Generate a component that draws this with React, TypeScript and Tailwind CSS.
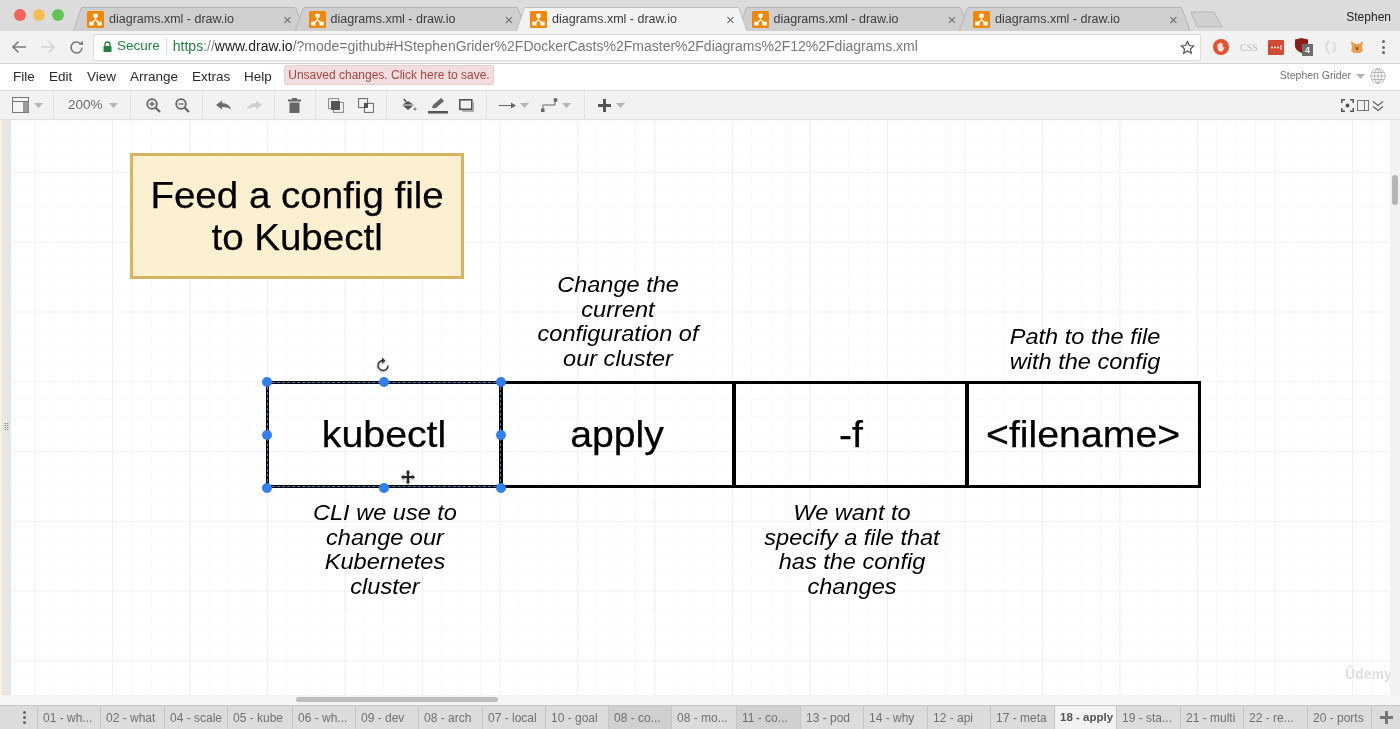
import React from "react";

const sans = "font-['Liberation_Sans',Arial,sans-serif]";

function Favicon() {
  return (
    <svg width="17" height="17" viewBox="0 0 17 17" className="shrink-0">
      <rect width="17" height="17" rx="1.5" fill="#f08705" />
      <path d="M8.5 6v3M8.5 9L4.5 12M8.5 9l4 3" stroke="#fff" strokeWidth="1.3" fill="none" />
      <rect x="6.3" y="2.8" width="4.4" height="3.6" rx=".5" fill="#fff" />
      <rect x="2.2" y="10.8" width="4.4" height="3.6" rx=".5" fill="#fff" />
      <rect x="10.4" y="10.8" width="4.4" height="3.6" rx=".5" fill="#fff" />
    </svg>
  );
}

function ChromeTab({ active }: { active?: boolean }) {
  return (
    <div className={`relative w-[221.5px] h-[24px] shrink-0 ${active ? "z-10" : ""}`}>
      <svg width="236" height="24" viewBox="0 0 236 24" className="absolute left-0 top-0">
        <path d="M0.5 24 L8 1.500 Q8.500 .5 10 .5 L221 .5 Q222.500 .5 223 1.500 L231 24" fill={active ? "#f2f2f2" : "#cfcfcf"} stroke={active ? "#bdbdbd" : "#b4b4b4"} strokeWidth="1" />
      </svg>
      <div className="absolute left-[14px] top-0 h-[24px] flex items-center">
        <div className="flex items-center gap-[5px] w-[196px]">
          <Favicon />
          <span className="text-[12.500px] text-[#3c3c3c] whitespace-nowrap">diagrams.xml - draw.io</span>
        </div>
        <span className="text-[15px] leading-none text-[#6d6d6d]">×</span>
      </div>
    </div>
  );
}

function Caret({ c = "#b5b5b5" }: { c?: string }) {
  return (
    <svg width="9" height="5" viewBox="0 0 9 5" className="shrink-0"><path d="M0 0h9L4.500 5z" fill={c} /></svg>
  );
}

const tabs: [string, number][] = [
  ["01 - wh...", 63], ["02 - what", 64], ["04 - scale", 63], ["05 - kube", 65], ["06 - wh...", 63],
  ["09 - dev", 63], ["08 - arch", 64], ["07 - local", 63], ["10 - goal", 63], ["08 - co...", 63],
  ["08 - mo...", 65], ["11 - co...", 64], ["13 - pod", 63], ["14 - why", 64], ["12 - api", 63],
  ["17 - meta", 64], ["18 - apply", 62], ["19 - sta...", 64], ["21 - multi", 63], ["22 - re...", 64], ["20 - ports", 64],
];

function Node({ x, w, text }: { x: number; w: number; text: string }) {
  return (
    <div style={{ left: x, width: w }} className="absolute top-[261px] h-[107px] border-[3.500px] border-black flex items-center justify-center text-[36px] text-black [-webkit-text-stroke:0.25px_black]">
      <span className="scale-x-[1.09]">{text}</span>
    </div>
  );
}

function Note({ cx, y, lines }: { cx: number; y: number; lines: string[] }) {
  return (
    <div style={{ left: cx - 120, top: y }} className="absolute w-[240px] text-center italic text-[22px] leading-[24.500px] text-black scale-x-[1.07]">
      {lines.map((l) => <div key={l}>{l}</div>)}
    </div>
  );
}

function Handle({ x, y }: { x: number; y: number }) {
  return <div style={{ left: x - 5, top: y - 5 }} className="absolute w-[10px] h-[10px] rounded-full bg-[#2f80ed]" />;
}

export default function App() {
  return (
    <div className={`${sans} w-[1400px] h-[729px] overflow-hidden flex flex-col bg-white blur-[0.4px]`}>
      {/* Title bar */}
      <div className="h-[31px] bg-[#dcdcdc] flex items-end relative shrink-0">
        <div className="flex items-center gap-[7px] pl-[14px] w-[73px] h-full pb-[2px] shrink-0">
          <span className="w-[12px] h-[12px] rounded-full bg-[#f2635a]" />
          <span className="w-[12px] h-[12px] rounded-full bg-[#f7bd4f]" />
          <span className="w-[12px] h-[12px] rounded-full bg-[#5fc453]" />
        </div>
        <ChromeTab />
        <ChromeTab />
        <ChromeTab active />
        <ChromeTab />
        <ChromeTab />
        <svg width="34" height="17" viewBox="0 0 34 17" className="ml-[9px] mb-[3px] shrink-0"><path d="M1 1h22q1 0 1.500 1L32 16H8q-1 0-1.500-1z" fill="#d0d0d0" stroke="#b8b8b8" /></svg>
        <span className="absolute right-[9px] top-[8px] text-[12px] text-[#222]">Stephen</span>
      </div>

      {/* Address row */}
      <div className="h-[33px] bg-[#f2f2f2] border-b border-[#d4d4d4] flex items-center shrink-0">
        <div className="w-[93px] flex items-center gap-[13px] pl-[11px] shrink-0">
          <svg width="16" height="14" viewBox="0 0 16 14"><path d="M15 7H2M7.500 1.500L2 7l5.500 5.500" stroke="#7a7a7a" strokeWidth="1.600" fill="none" /></svg>
          <svg width="16" height="14" viewBox="0 0 16 14"><path d="M1 7h13M8.500 1.500L14 7l-5.500 5.500" stroke="#d2d2d2" strokeWidth="1.600" fill="none" /></svg>
          <svg width="15" height="15" viewBox="0 0 15 15"><path d="M13 7.500A5.500 5.500 0 1 1 11.200 3.400" stroke="#7a7a7a" strokeWidth="1.600" fill="none" /><path d="M9.500 4.500L14 5V.8z" fill="#7a7a7a" /></svg>
        </div>
        <div className="w-[1108px] h-[27px] bg-white border border-[#dcdcdc] rounded-[2px] flex items-center pl-[8px] pb-[1px] text-[14px] shrink-0 relative">
          <svg width="11" height="12" viewBox="0 0 11 12" className="shrink-0"><path d="M3 5V3.500a2.500 2.500 0 0 1 5 0V5" stroke="#23803f" strokeWidth="1.300" fill="none" /><rect x="1.500" y="5" width="8" height="6" rx="1" fill="#23803f" /></svg>
          <span className="ml-[4px] text-[#23803f] text-[13.500px]">Secure</span>
          <span className="mx-[6px] w-px h-[17px] bg-[#d8d8d8]" />
          <span className="text-[#23803f]">https</span>
          <span className="text-[#888]">://</span>
          <span className="text-[#222]">www.draw.io</span>
          <span className="text-[#777]">/?mode=github#HStephenGrider%2FDockerCasts%2Fmaster%2Fdiagrams%2F12%2Fdiagrams.xml</span>
          <svg width="15" height="15" viewBox="0 0 24 24" className="absolute right-[5px] top-[5px]"><path d="M12 2.500l2.900 6.300 6.900.8-5.100 4.700 1.400 6.800-6.100-3.400-6.100 3.400 1.400-6.800L2.200 9.600l6.900-.8z" fill="none" stroke="#555" strokeWidth="2" /></svg>
        </div>
        <div className="flex-1 flex items-center h-full pl-[12px] gap-[11px]">
          <svg width="16" height="16" viewBox="0 0 16 16"><circle cx="8" cy="8" r="8" fill="#e2502f" /><path d="M4.500 7.500V5.500q.7-.8 1.300 0V4.500q.7-.8 1.300 0V4q.7-.8 1.300 0v.5q.7-.7 1.300 0V9l1-1q1 0 .6 1L9.500 12.500h-3Q4.500 11 4.500 9z" fill="#fbe3dc" /></svg>
          <span className="text-[10px] text-[#bdbdbd] w-[17px] font-['Liberation_Serif',serif]">CSS</span>
          <svg width="16" height="15" viewBox="0 0 16 15"><rect width="16" height="15" rx="1" fill="#d24b32" /><circle cx="4" cy="7.500" r="1" fill="#fff" /><circle cx="7" cy="7.500" r="1" fill="#fff" /><circle cx="10" cy="7.500" r="1" fill="#fff" /><rect x="12.500" y="5" width="1" height="5" fill="#fff" /></svg>
          <div className="relative w-[17px] h-[18px]">
            <svg width="13" height="15" viewBox="0 0 13 15" className="absolute left-0 top-0"><path d="M0 1.500L6.500 0 13 1.500V8q0 4-6.500 7Q0 12 0 8z" fill="#8c1d18" /></svg>
            <span className="absolute left-[7px] top-[6px] w-[11px] h-[12px] bg-[#6d6d6d] text-white text-[9px] leading-[12px] text-center font-bold">4</span>
          </div>
          <svg width="16" height="16" viewBox="0 0 16 16"><path d="M7 2A6.500 6.500 0 0 0 7 14M9.500 3A6 6 0 0 1 9.500 13" stroke="#dedede" strokeWidth="2.500" fill="none" /></svg>
          <svg width="14" height="14" viewBox="0 0 14 14"><path d="M1 1l4 3h4l4-3-1 7 1 3-3 2H4l-3-2 1-3z" fill="#e8a04a" /><path d="M5 6l2 2 2-2-1 4H6z" fill="#8a5a2b" /></svg>
          <div className="flex flex-col gap-[2.500px] ml-[7px]">
            <span className="w-[3px] h-[3px] rounded-full bg-[#666]" />
            <span className="w-[3px] h-[3px] rounded-full bg-[#666]" />
            <span className="w-[3px] h-[3px] rounded-full bg-[#666]" />
          </div>
        </div>
      </div>

      {/* Menu row */}
      <div className="h-[26px] bg-white flex items-center pl-[13px] relative shrink-0 text-[13.500px] text-[#2a2a2a]">
        <span className="w-[36px]">File</span>
        <span className="w-[38px]">Edit</span>
        <span className="w-[43px]">View</span>
        <span className="w-[62px]">Arrange</span>
        <span className="w-[52px]">Extras</span>
        <span className="w-[40px]">Help</span>
        <div className="h-[20px] w-[210px] rounded-[2px] bg-[#f2dede] border border-[#ebcccc] text-[#a94442] text-[12px] flex items-center justify-center mt-[-4px]">Unsaved changes. Click here to save.</div>
        <div className="absolute right-[14px] top-[4px] flex items-center gap-[5px] text-[10.500px] text-[#707070]">
          <span>Stephen Grider</span>
          <Caret />
          <svg width="16" height="16" viewBox="0 0 16 16"><g fill="none" stroke="#aaa" strokeWidth=".8"><circle cx="8" cy="8" r="7.300" /><ellipse cx="8" cy="8" rx="3.500" ry="7.300" /><path d="M8 .7v14.600M.7 8h14.600M1.800 4.500h12.400M1.800 11.500h12.400" /></g></svg>
        </div>
      </div>

      {/* Toolbar */}
      <div className="h-[30px] bg-[#f2f2f2] border-y border-[#e0e0e0] flex items-center shrink-0 relative text-[#6b6b6b]">
        <div className="w-[54px] h-full border-r border-[#e2e2e2] flex items-center pl-[12px] gap-[5px] shrink-0">
          <svg width="17" height="16" viewBox="0 0 17 16"><rect x=".5" y=".5" width="16" height="15" fill="#f4f4f4" stroke="#777" /><path d="M.5 4.500h16" stroke="#777" /><rect x="11" y="5" width="5.500" height="10" fill="#999" /></svg>
          <Caret />
        </div>
        <div className="w-[77px] h-full border-r border-[#e2e2e2] flex items-center pl-[14px] gap-[6px] shrink-0 text-[13.500px]">
          <span>200%</span><Caret />
        </div>
        <div className="w-[72px] h-full border-r border-[#e2e2e2] flex items-center pl-[15px] gap-[14px] shrink-0">
          <svg width="15" height="15" viewBox="0 0 15 15"><circle cx="6" cy="6" r="4.800" fill="none" stroke="#666" strokeWidth="1.800" /><path d="M9.500 9.500L14 14" stroke="#666" strokeWidth="2.200" /><path d="M3.500 6h5M6 3.500v5" stroke="#666" strokeWidth="1.300" /></svg>
          <svg width="15" height="15" viewBox="0 0 15 15"><circle cx="6" cy="6" r="4.800" fill="none" stroke="#666" strokeWidth="1.800" /><path d="M9.500 9.500L14 14" stroke="#666" strokeWidth="2.200" /><path d="M3.500 6h5" stroke="#666" strokeWidth="1.300" /></svg>
        </div>
        <div className="w-[72px] h-full border-r border-[#e2e2e2] flex items-center pl-[13px] gap-[16px] shrink-0">
          <svg width="15" height="10" viewBox="0 0 15 10"><path d="M0 5l6-4.500V3q7 0 9 6.500Q12 6.500 6 7v2.500z" fill="#6d6d6d" /></svg>
          <svg width="15" height="10" viewBox="0 0 15 10"><path d="M15 5L9 .5V3Q2 3 0 9.500 3 6.500 9 7v2.500z" fill="#cfcfcf" /></svg>
        </div>
        <div className="w-[41px] h-full border-r border-[#e2e2e2] flex items-center pl-[13px] shrink-0">
          <svg width="13" height="15" viewBox="0 0 13 15"><rect y="1.500" width="13" height="2" fill="#666" /><rect x="4" width="5" height="2" fill="#666" /><path d="M1.500 4.500h10V15h-10z" fill="#666" /></svg>
        </div>
        <div className="w-[71px] h-full border-r border-[#e2e2e2] flex items-center pl-[12px] gap-[14px] shrink-0">
          <svg width="16" height="15" viewBox="0 0 16 15"><rect x=".6" y=".6" width="10" height="10" fill="none" stroke="#888" /><rect x="5.400" y="4.400" width="10" height="10" fill="none" stroke="#888" /><rect x="3" y="3" width="9" height="9" fill="#555" /></svg>
          <svg width="16" height="15" viewBox="0 0 16 15"><rect x=".6" y=".6" width="9" height="9" fill="#f4f4f4" stroke="#666" /><rect x="6.400" y="5.400" width="9" height="9" fill="#f4f4f4" stroke="#666" /><rect x="6" y="5" width="4" height="5" fill="#555" /></svg>
        </div>
        <div className="w-[100px] h-full border-r border-[#e2e2e2] flex items-center pl-[13px] gap-[11px] shrink-0">
          <svg width="17" height="15" viewBox="0 0 17 15"><path d="M2 7l6-4 6 4-6 5z" fill="#555" /><path d="M4 1l2 3" stroke="#555" strokeWidth="1.500" /><circle cx="15" cy="11" r="1.500" fill="#888" /><path d="M2 7h12" stroke="#eee" /></svg>
          <svg width="20" height="17" viewBox="0 0 20 17"><path d="M4 11l1-3 8-7 3 3-8 7z" fill="#666" /><rect x="0" y="14" width="20" height="2.500" fill="#555" /></svg>
          <svg width="15" height="13" viewBox="0 0 15 13"><rect x=".8" y=".8" width="12" height="9.500" fill="none" stroke="#555" strokeWidth="1.600" /><path d="M3 12h11V3" stroke="#999" strokeWidth="1.600" fill="none" /></svg>
        </div>
        <div className="w-[98px] h-full border-r border-[#e2e2e2] flex items-center pl-[12px] shrink-0">
          <svg width="17" height="7" viewBox="0 0 17 7"><path d="M0 3.500h13" stroke="#666" /><path d="M12 .5l5 3-5 3z" fill="#666" /></svg>
          <span className="ml-[4px] mr-[12px]"><Caret /></span>
          <svg width="17" height="14" viewBox="0 0 17 14"><path d="M2 12V7h12V2" fill="none" stroke="#666" /><rect x="0" y="10.500" width="3.500" height="3.500" fill="#666" /><circle cx="14.500" cy="2" r="2" fill="#666" /></svg>
          <span className="ml-[4px]"><Caret /></span>
        </div>
        <div className="flex items-center pl-[13px] gap-[5px] shrink-0">
          <svg width="13" height="13" viewBox="0 0 13 13"><path d="M6.500 0v13M0 6.500h13" stroke="#555" strokeWidth="3" /></svg>
          <Caret />
        </div>
        <div className="absolute right-[16px] top-[8px] flex items-center gap-[3px]">
          <svg width="13" height="13" viewBox="0 0 13 13"><path d="M.8 4V.8H4M9 .8h3.200V4M12.200 9v3.200H9M4 12.200H.8V9" fill="none" stroke="#555" strokeWidth="1.500" /><circle cx="6.500" cy="6.500" r="2" fill="#555" /></svg>
          <svg width="12" height="11" viewBox="0 0 12 11"><rect x=".5" y=".5" width="11" height="10" fill="none" stroke="#777" /><path d="M7.500 .5v10" stroke="#777" /></svg>
          <svg width="12" height="12" viewBox="0 0 12 12"><path d="M1 1.500l5 4 5-4M1 6.500l5 4 5-4" fill="none" stroke="#666" strokeWidth="1.300" /></svg>
        </div>
      </div>

      {/* Middle */}
      <div className="flex-1 min-h-0 flex">
        <div className="w-[2px] bg-[#fbf1dc] shrink-0" />
        <div className="w-[9px] bg-[#e6e6e6] flex items-center justify-center shrink-0">
          <span className="text-[9px] text-[#555] leading-none mt-[40px]">⁞⁞</span>
        </div>
        <div className="flex-1 relative overflow-hidden bg-white">
          <div className="absolute inset-0 bg-[linear-gradient(to_right,#f0f0f0_1px,transparent_1px),linear-gradient(to_bottom,#f3f3f3_1px,transparent_1px),linear-gradient(to_right,#f9f9f9_1px,transparent_1px),linear-gradient(to_bottom,#fafafa_1px,transparent_1px)] bg-[size:77.500px_69.750px,77.500px_69.750px,19.375px_17.437px,19.375px_17.437px] bg-[position:23.500px_52px,23.500px_52px,4px_0px,4px_0px]" />
          {/* Title card */}
          <div className="absolute left-[119px] top-[33px] w-[334px] h-[126px] bg-[#fdf0d0] border-[3.500px] border-[#d6b35f] flex items-center justify-center text-center text-[36px] leading-[42px] text-black [-webkit-text-stroke:0.25px_black]">
            <div className="scale-x-[1.07] mt-[1px]">Feed a config file<br />to Kubectl</div>
          </div>

          <Node x={255} w={236} text="kubectl" />
          <Node x={489} w={235} text="apply" />
          <Node x={722} w={235} text="-f" />
          <Node x={955} w={235} text="<filename>" />

          <Note cx={607} y={153} lines={["Change the", "current", "configuration of", "our cluster"]} />
          <Note cx={1074} y={205} lines={["Path to the file", "with the config"]} />
          <Note cx={374} y={381} lines={["CLI we use to", "change our", "Kubernetes", "cluster"]} />
          <Note cx={841} y={381} lines={["We want to", "specify a file that", "has the config", "changes"]} />

          {/* Selection */}
          <div className="absolute left-[256px] top-[262px] w-[234px] h-[105px] border border-dashed border-[#3b82c4]" />
          {[[256, 262], [373, 262], [489.500, 262], [256, 315], [489.500, 315], [256, 367.500], [373, 367.500], [489.500, 367.500]].map(([x, y]) => (
            <Handle key={`${x}-${y}`} x={x} y={y} />
          ))}
          <svg width="16" height="16" viewBox="0 0 16 16" className="absolute left-[364px] top-[237px] drop-shadow-[0_1px_1px_rgba(0,0,0,0.4)]">
            <path d="M13 8.500A5 5 0 1 1 9.500 3.700" fill="none" stroke="#333" strokeWidth="1.400" />
            <path d="M7 .5l3.500 3.200L7 6.500z" fill="#333" />
          </svg>
          <svg width="14" height="14" viewBox="0 0 14 14" className="absolute left-[390px] top-[350px] drop-shadow-[0_1px_1px_rgba(0,0,0,0.4)]">
            <path d="M7 0l2.200 2.500H8V6h3.500V4.800L14 7l-2.500 2.200V8H8v3.500h1.200L7 14l-2.200-2.500H6V8H2.500v1.200L0 7l2.500-2.200V6H6V2.500H4.800z" fill="#222" />
          </svg>
          <span className="absolute left-[1334px] top-[544px] text-[14px] text-[#dedede] font-bold">Ûdemy</span>

          {/* vertical scrollbar */}
          <div className="absolute right-0 top-0 bottom-0 w-[10px] bg-[#f2f2f2]">
            <div className="absolute left-[2px] top-[55px] w-[6px] h-[30px] rounded-full bg-[#b5b5b5]" />
          </div>
        </div>
      </div>

      {/* Horizontal scrollbar */}
      <div className="h-[10px] bg-[#f5f5f5] shrink-0 relative">
        <div className="absolute left-[296px] top-[2px] w-[202px] h-[5px] rounded-full bg-[#bdbdbd]" />
      </div>

      {/* Sheet tabs */}
      <div className="h-[24px] pl-[11px] bg-[#dcdcdc] border-t border-[#c8c8c8] flex shrink-0 text-[12px] text-[#707070]">
        <div className="w-[27px] flex flex-col items-center justify-center gap-[2px] border-r border-[#c4c4c4] shrink-0">
          <span className="w-[3px] h-[3px] rounded-full bg-[#666]" />
          <span className="w-[3px] h-[3px] rounded-full bg-[#666]" />
          <span className="w-[3px] h-[3px] rounded-full bg-[#666]" />
        </div>
        {tabs.map(([t, w]) => (
          <div
            key={t}
            style={{ width: w }}
            className={`${t === "18 - apply" ? "bg-[#f2f2f2] font-bold text-[#555] text-[11.500px]" : t === "08 - co..." || t === "11 - co..." ? "bg-[#d0d0d0]" : ""} border-r border-[#c4c4c4] pl-[5px] flex items-center whitespace-nowrap shrink-0`}
          >
            {t}
          </div>
        ))}
        <div className="flex-1 flex items-center justify-center">
          <svg width="13" height="13" viewBox="0 0 13 13"><path d="M6.500 0v13M0 6.500h13" stroke="#777" strokeWidth="3" /></svg>
        </div>
      </div>
    </div>
  );
}
